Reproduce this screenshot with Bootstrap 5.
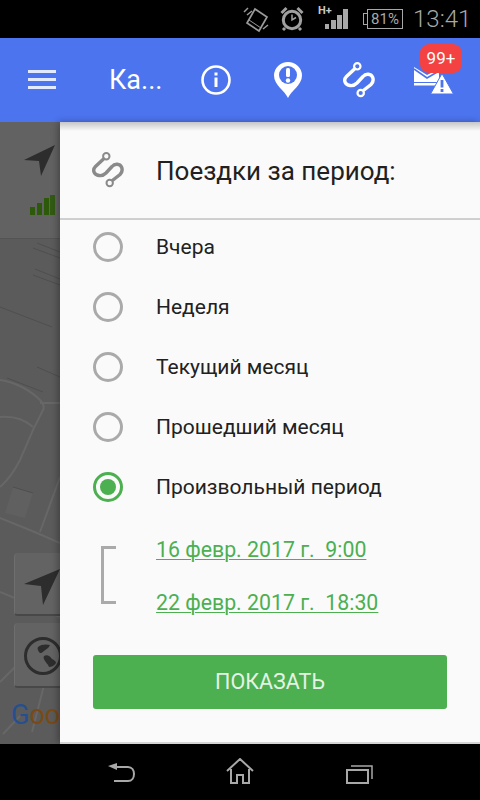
<!DOCTYPE html>
<html lang="ru">
<head>
    <meta charset="UTF-8">
    <meta name="viewport" content="width=device-width, initial-scale=1.0">
    <title>Поездки за период</title>
    <link href="https://cdn.jsdelivr.net/npm/bootstrap@5.3.0/dist/css/bootstrap.min.css" rel="stylesheet">
    <style>
        html, body { height: 800px; overflow: hidden; }
        body { font-family: Roboto, "Liberation Sans", sans-serif; background: #000; }
        .phone { width: 480px; height: 800px; }

        .status-bar { height: 38px; background: #000; color: #a8a8a8; padding-right: 10px; }
        .status-time { font-size: 24px; font-weight: 300; line-height: 38px; margin-left: 10px; width: 57px; }
        .battery-box { width: 36px; height: 20px; border: 1px solid #a8a8a8; font-size: 15px; line-height: 18px; text-align: center; margin-left: 19px; position: relative; }
        .battery-box::before { content: ""; position: absolute; left: -5px; top: 3px; width: 5px; height: 12px; border: 1px solid #a8a8a8; border-right: 0; }
        .st-rotate { margin-right: 10px; }
        .st-alarm { margin-right: 14px; }

        .app-bar { height: 84px; background: #4c74ef; color: #fff; }
        .bar-title { font-size: 27px; position: absolute; left: 109px; top: 25px; line-height: 34px; }
        .bar-icon { position: absolute; }
        .ico-menu { left: 28px; top: 32px; }
        .ico-info { left: 201px; top: 27px; }
        .ico-pin { left: 274px; top: 24px; }
        .ico-route { left: 342px; top: 24px; }
        .ico-mail { left: 414px; top: 28px; }
        .count-pill { position: absolute; left: 420px; top: 6px; width: 42px; height: 29px; background: #f44242; border-radius: 9px; font-size: 17px; line-height: 29px; text-align: center; color: #fff; }

        .main-area { height: 622px; }
        .map-canvas { position: absolute; left: 0; top: 0; width: 60px; height: 622px; background: #5b5b5b; overflow: hidden; }
        .map-top { position: absolute; left: 0; top: 0; width: 60px; height: 117px; background: #626262; border-bottom: 1px solid #545454; }
        .map-roads { position: absolute; left: 0; top: 0; }
        .map-btn { position: absolute; left: 14px; width: 60px; background: #636363; border-radius: 4px; border-bottom: 2px solid #484848; border-left: 1px solid #6e6e6e; }
        .map-btn-a { top: 431px; height: 63px; }
        .map-btn-b { top: 501px; height: 65px; }
        .arrow-top { position: absolute; left: 24px; top: 22px; }
        .signal-top { position: absolute; left: 30px; top: 73px; }
        .arrow-btn { position: absolute; left: 24px; top: 447px; }
        .globe-btn { position: absolute; left: 24px; top: 514px; }
        .google-mark { position: absolute; left: 11px; top: 578px; font-size: 27px; line-height: 30px; white-space: nowrap; color: #7a4a16; }
        .google-mark b { color: #25508f; font-weight: 400; }

        .sheet { position: absolute; left: 60px; top: 0; width: 420px; height: 622px; background: #fafafa; box-shadow: -2px 0 7px rgba(0,0,0,.3); border-bottom: 2px solid #d4d4d4; }
        .sheet-head { height: 98px; border-bottom: 2px solid #cfcfcf; padding-left: 31px; background: linear-gradient(#c6c6c6, #fafafa 9px); }
        .sheet-head-title { font-size: 26px; color: #212121; margin-left: 31px; line-height: 32px; padding-top: 2px; }
        .period-list { margin-top: -3px; }
        .period-row { height: 60px; padding-left: 33px; padding-top: 2px; font-size: 21px; color: #212121; }
        .radio-mark { width: 30px; height: 30px; border: 3px solid #aaa; border-radius: 50%; margin-right: 33px; margin-top: -2px; flex-shrink: 0; }
        .radio-mark.is-on { border-color: #4caf50; padding: 4px; }
        .radio-mark.is-on::after { content: ""; display: block; width: 16px; height: 16px; background: #4caf50; border-radius: 50%; }
        .date-block { padding-left: 41px; margin-top: 21px; }
        .range-bracket { width: 15px; height: 58px; border: 3px solid #aaa; border-right: 0; margin-right: 40px; margin-top: 8px; }
        .date-link { display: block; width: fit-content; font-size: 21.3px; line-height: 24px; color: #4caf50; text-decoration: underline; text-decoration-thickness: 1px; text-underline-offset: 2px; white-space: pre; }
        .date-link + .date-link { margin-top: 29px; }
        .show-btn { display: block; width: 354px; height: 54px; margin: 40px 0 0 33px; background: #4caf50; border: 0; border-radius: 3px; color: #e4f3e5; font-size: 21.5px; line-height: 54px; padding: 0; }

        .nav-bar { height: 56px; background: #000; }
        .ico-back { left: 107px; top: 18px; }
        .ico-home { left: 226px; top: 14px; }
        .ico-recent { left: 346px; top: 20px; }
    </style>
</head>
<body>
<div class="phone d-flex flex-column">
    <div class="status-bar d-flex align-items-center justify-content-end">
        <svg class="st-rotate" width="27" height="28" viewBox="0 0 27 28" fill="none" stroke="#9a9a9a" stroke-width="1.7">
            <path d="M12 4L24 12 16 26 4 18z"/>
            <path d="M6 15l12 8" stroke-width="1"/>
            <path d="M1 7l4-4M4 10l5-4M20 24l5-4" stroke-width="1.5"/>
        </svg>
        <svg class="st-alarm" width="24" height="26" viewBox="0 0 24 26" fill="none" stroke="#a0a0a0" stroke-width="3">
            <circle cx="12" cy="14" r="8.7"/>
            <path d="M12 8.5v5.5l4-2.5" stroke-width="1.5"/>
            <path d="M1.5 7l5-5M22.5 7l-5-5M5 22l-2 2M19 22l2 2"/>
        </svg>
        <svg width="30" height="34" viewBox="0 -4 30 34">
            <text x="0" y="8" font-size="11" font-weight="700" fill="#c8c8c8" font-family="Roboto, sans-serif">H+</text>
            <path d="M7 18h4v5H7zM13 14h5v9h-5zM19 9h5v14h-5zM25 3h5v20h-5z" fill="#a8a8a8"/>
        </svg>
        <div class="battery-box">81%</div>
        <div class="status-time">13:41</div>
    </div>

    <div class="app-bar position-relative">
        <svg class="bar-icon ico-menu" width="28" height="20" viewBox="0 0 28 20" fill="#fff">
            <rect y="0" width="28" height="3" opacity=".85"/><rect y="8" width="28" height="3" opacity=".85"/><rect y="16" width="28" height="3" opacity=".85"/>
        </svg>
        <div class="bar-title">Ка...</div>
        <svg class="bar-icon ico-info" width="30" height="30" viewBox="0 0 30 30">
            <circle cx="15" cy="15" r="13.5" fill="none" stroke="#fff" stroke-width="2.6"/>
            <rect x="13.5" y="12.5" width="3" height="9.5" fill="#fff"/><rect x="13.5" y="7.5" width="3" height="3" fill="#fff"/>
        </svg>
        <svg class="bar-icon ico-pin" width="28" height="36" viewBox="0 0 28 36">
            <path d="M14 36C11 29 0 23 0 13.5a14 13.5 0 0 1 28 0C28 23 17 29 14 36z" fill="#fff"/>
            <circle cx="14" cy="13" r="9" fill="#4c74ef"/>
            <rect x="12" y="6" width="4" height="9" rx="1.5" fill="#fff"/><circle cx="14" cy="18.5" r="2.2" fill="#fff"/>
        </svg>
        <svg class="bar-icon ico-route" width="34" height="36" viewBox="0 0 34 36" fill="none" stroke="#fff">
            <path d="M12.5 7L4.5 14.5C1 18 3 23 8 23.5 11 24 13 23 15 21L21 14.5C24 11 29 12 30.5 15 32 18.5 31 20.5 29 22.5L22 28" stroke-width="3.4" stroke-linecap="round"/>
            <circle cx="15.3" cy="4.3" r="3.2" stroke-width="2.2"/>
            <circle cx="18.7" cy="31" r="3.2" stroke-width="2.2"/>
        </svg>
        <svg class="bar-icon ico-mail" width="40" height="30" viewBox="0 0 40 30">
            <path d="M0 1l13 8 12-6v13L0 16z" fill="#fff"/>
            <path d="M0 17h24v2.5H0z" fill="#fff"/>
            <path d="M0 3l13 9 12-7" fill="none" stroke="#4c74ef" stroke-width="1.6"/>
            <path d="M28 7.5L39.5 28h-23z" fill="#fff" stroke="#4c74ef" stroke-width="1"/>
            <rect x="26.6" y="14" width="2.8" height="7.5" fill="#4c74ef"/><rect x="26.6" y="23" width="2.8" height="3" fill="#4c74ef"/>
        </svg>
        <div class="count-pill">99+</div>
    </div>

    <div class="main-area position-relative">
        <div class="map-canvas">
            <div class="map-top"></div>
            <svg class="map-roads" width="60" height="622" viewBox="0 0 60 622" fill="none">
                <path d="M13 365l20 6-8 25-20-5z" fill="#606060"/>
                <g stroke="#676767" stroke-width="2">
                    <path d="M0 258c15 2 30 10 40 20 4 4 4 8 3 10L33 308 20 338C14 350 8 358 0 365"/>
                    <path d="M0 295c12-1 24 2 33 10M40 281h20M0 396l37 15 23 10M40 410l20-55"/>
                    <path d="M0 470l60 25M0 560l20-20M50 540l-18 70M3 612l17-18"/>
                </g>
                <g stroke="#4f4f4f" stroke-width="1">
                    <path d="M0 185l52 20M33 126l27 10M37 121l23 9M33 153l27 10M35 147l25 10M7 256l36 14M13 365l20 6M37 245l23 10"/>
                </g>
            </svg>
            <svg class="arrow-top" width="32" height="32" viewBox="0 0 32 32"><path d="M31 1L0 16l15 1 2 15z" fill="#2d2d2d"/></svg>
            <svg class="signal-top" width="25" height="22" viewBox="0 0 25 22" fill="#2c5a0a">
                <rect y="12" width="5" height="8"/><rect x="7" y="8" width="5" height="12"/><rect x="14" y="3" width="5" height="17"/><rect x="20" y="0" width="5" height="20" opacity=".9"/>
            </svg>
            <div class="map-btn map-btn-a"></div>
            <div class="map-btn map-btn-b"></div>
            <svg class="arrow-btn" width="36" height="36" viewBox="0 0 36 36"><path d="M36 0L0 15l17 2 2 19z" fill="#2d2d2d"/></svg>
            <svg class="globe-btn" width="36" height="40" viewBox="0 0 36 40" fill="none">
                <circle cx="19" cy="20" r="17.5" stroke="#2d2d2d" stroke-width="3"/>
                <path d="M14 11c3-3 9-3 12-2-1 3-4 4-6 6-2 2-4 3-5 1-1-2-2-3-1-5zM20 20c3-2 6 0 8 3 2 1 4 2 4 4-2 3-5 4-7 4-1-3-3-4-4-6-1-2-2-3-1-5z" fill="#2d2d2d"/>
            </svg>
            <div class="google-mark"><b>G</b>oo</div>
        </div>
        <div class="sheet">
            <div class="sheet-head d-flex align-items-center">
                <svg width="34" height="36" viewBox="0 0 34 36" fill="none" stroke="#8a8a8a">
                    <path d="M12.5 7L4.5 14.5C1 18 3 23 8 23.5 11 24 13 23 15 21L21 14.5C24 11 29 12 30.5 15 32 18.5 31 20.5 29 22.5L22 28" stroke-width="3.4" stroke-linecap="round"/>
                    <circle cx="15.3" cy="4.3" r="3.2" stroke-width="2"/>
                    <circle cx="18.7" cy="31" r="3.2" stroke-width="2"/>
                </svg>
                <div class="sheet-head-title">Поездки за период:</div>
            </div>
            <div class="period-list">
                <div class="period-row d-flex align-items-center"><span class="radio-mark"></span>Вчера</div>
                <div class="period-row d-flex align-items-center"><span class="radio-mark"></span>Неделя</div>
                <div class="period-row d-flex align-items-center"><span class="radio-mark"></span>Текущий месяц</div>
                <div class="period-row d-flex align-items-center"><span class="radio-mark"></span>Прошедший месяц</div>
                <div class="period-row d-flex align-items-center"><span class="radio-mark is-on"></span>Произвольный период</div>
            </div>
            <div class="date-block d-flex">
                <div class="range-bracket"></div>
                <div>
                    <a href="#" class="date-link">16 февр. 2017 г.  9:00</a>
                    <a href="#" class="date-link">22 февр. 2017 г.  18:30</a>
                </div>
            </div>
            <button type="button" class="btn show-btn">ПОКАЗАТЬ</button>
        </div>
    </div>

    <div class="nav-bar d-flex position-relative">
        <svg class="bar-icon ico-back" width="28" height="22" viewBox="0 0 28 22" fill="none" stroke="#a8a8a8" stroke-width="2">
            <path d="M6 5h15c8 0 8 14 0 14H7"/><path d="M1 4l9-3v7z" fill="#a8a8a8" stroke="none"/>
        </svg>
        <svg class="bar-icon ico-home" width="28" height="26" viewBox="0 0 28 26" fill="none" stroke="#a8a8a8" stroke-width="2">
            <path d="M1 13L14 1l13 12M5 11v14h6v-8h6v8h6V11"/>
        </svg>
        <svg class="bar-icon ico-recent" width="28" height="20" viewBox="0 0 28 20" fill="none" stroke="#a8a8a8" stroke-width="2">
            <rect x="1" y="6" width="21" height="13"/><path d="M5 2h21v13" stroke-width="1.5"/>
        </svg>
    </div>
</div>
<script src="https://cdn.jsdelivr.net/npm/bootstrap@5.3.0/dist/js/bootstrap.bundle.min.js"></script>
</body>
</html>
